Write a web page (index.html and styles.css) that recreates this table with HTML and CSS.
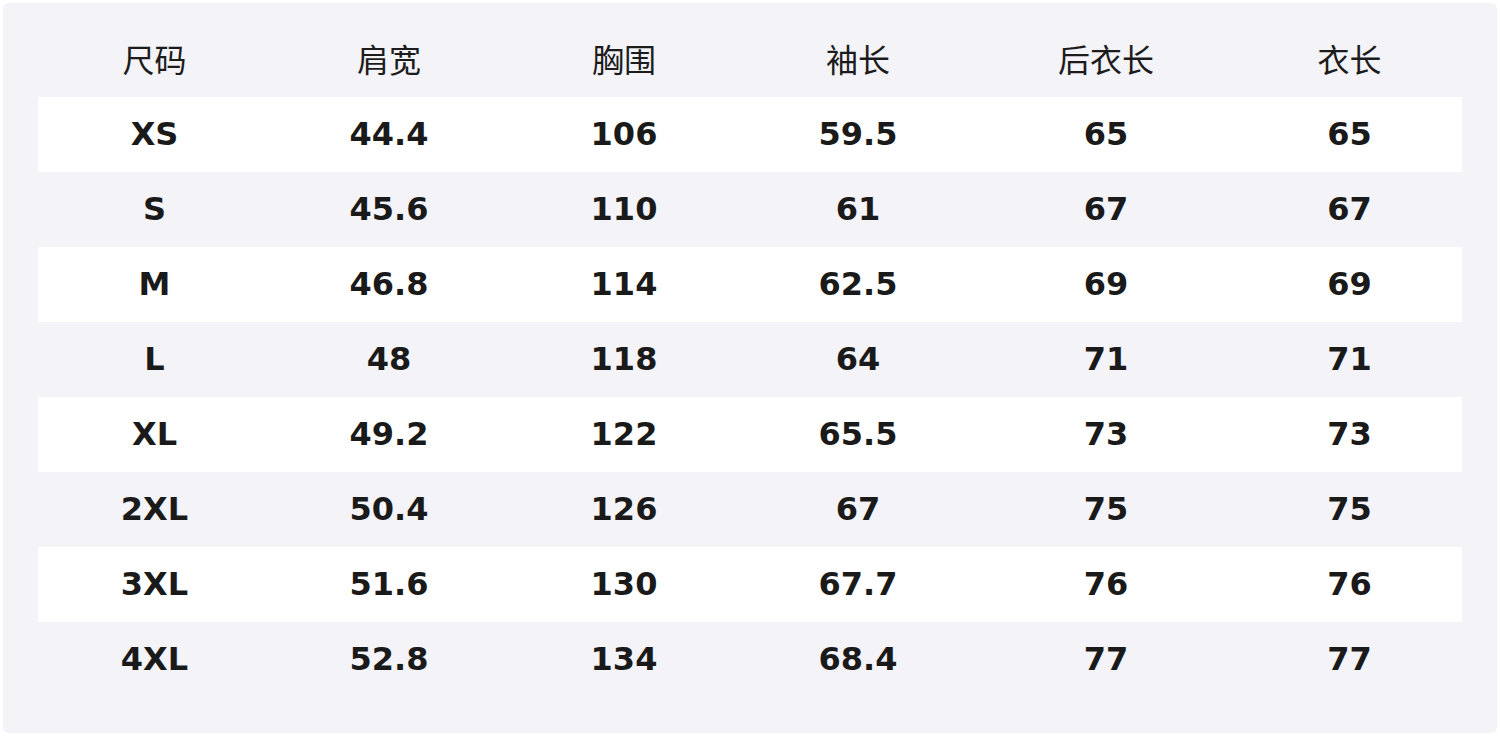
FILE: index.html
```html
<!DOCTYPE html>
<html>
<head>
<meta charset="utf-8">
<link rel="stylesheet" href="styles.css">
</head>
<body>
<div class="panel">
  <table class="sizes">
    <colgroup>
      <col class="c1"><col class="c2"><col class="c3"><col class="c4"><col class="c5"><col class="c6">
    </colgroup>
    <thead>
      <tr><th>尺码</th><th>肩宽</th><th>胸围</th><th>袖长</th><th>后衣长</th><th>衣长</th></tr>
    </thead>
    <tbody>
      <tr><td>XS</td><td>44.4</td><td>106</td><td>59.5</td><td>65</td><td>65</td></tr>
      <tr><td>S</td><td>45.6</td><td>110</td><td>61</td><td>67</td><td>67</td></tr>
      <tr><td>M</td><td>46.8</td><td>114</td><td>62.5</td><td>69</td><td>69</td></tr>
      <tr><td>L</td><td>48</td><td>118</td><td>64</td><td>71</td><td>71</td></tr>
      <tr><td>XL</td><td>49.2</td><td>122</td><td>65.5</td><td>73</td><td>73</td></tr>
      <tr><td>2XL</td><td>50.4</td><td>126</td><td>67</td><td>75</td><td>75</td></tr>
      <tr><td>3XL</td><td>51.6</td><td>130</td><td>67.7</td><td>76</td><td>76</td></tr>
      <tr><td>4XL</td><td>52.8</td><td>134</td><td>68.4</td><td>77</td><td>77</td></tr>
    </tbody>
  </table>
</div>
</body>
</html>
```

FILE: styles.css
```css
html, body {
  margin: 0;
  padding: 0;
  background: #ffffff;
}
body {
  width: 1500px;
  height: 736px;
  padding: 3px;
  box-sizing: border-box;
}
.panel {
  width: 1494px;
  height: 730px;
  box-sizing: border-box;
  background: #f3f3f8;
  border-radius: 6px;
  padding: 19px 35px 0 35px;
}
.sizes {
  width: 1424px;
  border-collapse: collapse;
  table-layout: fixed;
  color: #1a1a1a;
}
.c1 { width: 233px; }
.c2 { width: 236px; }
.c3 { width: 234px; }
.c4 { width: 234px; }
.c5 { width: 262px; }
.c6 { width: 225px; }
.sizes th, .sizes td {
  height: 75px;
  padding: 0;
  text-align: center;
  vertical-align: middle;
  line-height: 1;
}
.sizes th {
  font-family: "Noto Sans CJK SC", "Noto Sans", sans-serif;
  font-weight: 400;
  font-size: 32px;
  color: #1c1c1c;
  padding-bottom: 3px;
  height: 72px;
}
.sizes td {
  font-family: "DejaVu Sans", sans-serif;
  font-weight: 700;
  font-size: 32px;
  padding-bottom: 1px;
  height: 74px;
}
.sizes tbody tr:nth-child(odd) {
  background: #ffffff;
}
```
